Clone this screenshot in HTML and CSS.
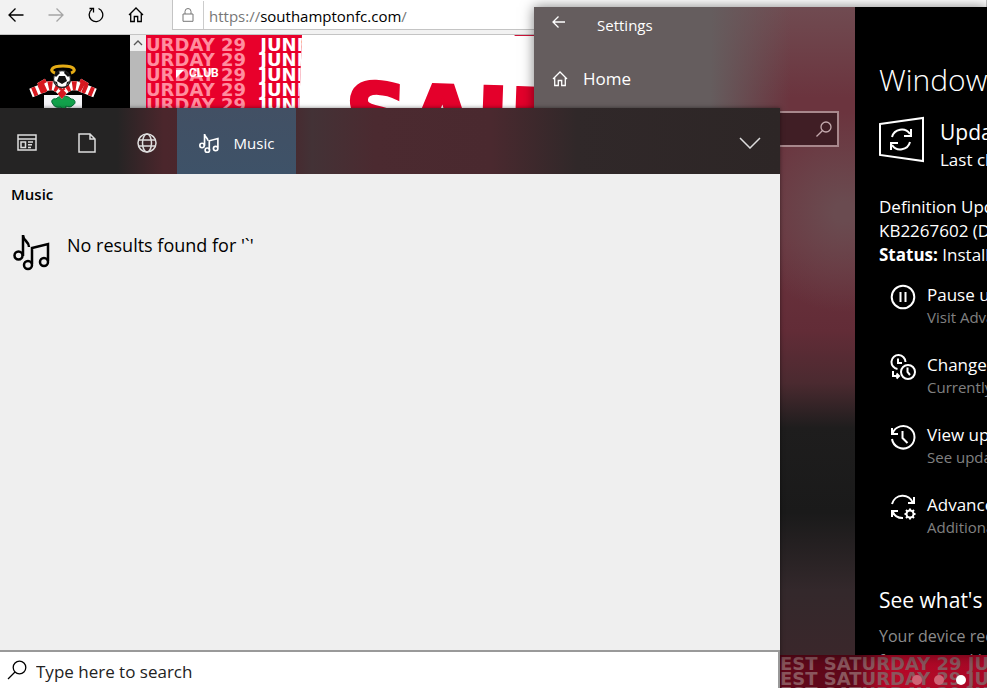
FILE: index.html
```html
<!DOCTYPE html>
<html lang="en">
<head>
    <meta charset="UTF-8">
    <meta name="viewport" content="width=device-width, initial-scale=1.0">
    <title>Desktop</title>
    <link rel="stylesheet" href="styles.css">
</head>
<body>
    <div class="desktop">
        <!-- Browser -->
        <div class="browser">
            <div class="toolbar">
                <div class="toolbar-buttons">
                    <button class="icon-button" aria-label="Back"><svg width="16" height="16" viewBox="0 0 16 16"><path d="M15.500 8H1M7.500 1.500L1 8l6.500 6.500"/></svg></button>
                    <button class="icon-button faded" aria-label="Forward"><svg width="16" height="16" viewBox="0 0 16 16"><path d="M.5 8H15M8.500 1.500L15 8l-6.500 6.500"/></svg></button>
                    <button class="icon-button" aria-label="Refresh"><svg width="16" height="16" viewBox="0 0 16 16"><path d="M10.500 1.500A6.800 6.800 0 1 1 4 2.300M1.500 1.500h4v4"/></svg></button>
                    <button class="icon-button" aria-label="Home"><svg width="16" height="16" viewBox="0 0 16 16"><path d="M1 8l7-7 7 7M2.700 6.500v8h3.600V9.500h3.400v5h3.600v-8"/></svg></button>
                </div>
                <div class="address-bar">
                    <svg class="lock" width="12" height="14" viewBox="0 0 12 14"><path d="M1 6h10v7.300H1zM3 6V3.500a3 3 0 0 1 6 0V6"/></svg>
                    <div class="address" role="textbox" aria-label="Address">https://<span>southamptonfc.com</span>/</div>
                </div>
            </div>
            <div class="page">
                <div class="club-sidebar">
                    <svg class="crest" width="70" height="60" viewBox="0 0 70 60">
                        <path d="M16 31h38v29H16z" fill="#f4f4f8"/>
                        <path d="M25 40c-3-3 0-6 3-5 3-4 12-4 15 0 5 0 5 5 2 6-2 3-6 2-7 1v8h-5v-7c-3 1-7 0-8-3z" fill="#12a14b" stroke="#063" stroke-width="1"/>
                        <!-- scarf: white band with red stripes -->
                        <g class="scarf">
                            <path d="M14 25Q25 17 34 28Q44 17 56 25"/>
                            <path d="M15 24L3 29M55 24l12 5M13 17l3 5M57 17l-3 5"/>
                        </g>
                        <g class="scarf stripes">
                            <path d="M14 25Q25 17 34 28Q44 17 56 25"/>
                            <path d="M15 24L3 29M55 24l12 5M13 17l3 5M57 17l-3 5"/>
                        </g>
                        <circle cx="34" cy="15" r="8.500" fill="#fff" stroke="#222"/>
                        <path d="M31 12h6l2 5-5 3-5-3zM26 11l4-4 2 2-4 4zM37 7l5 4-2 2-4-4zM26 17l3 1 1 4zM42 17l-3 1-1 4z" fill="#111"/>
                        <path class="halo" d="M27 9C21 7 23 2 35 2s14 5 8 7"/>
                    </svg>
                </div>
                <div class="scrollbar">
                    <button class="scroll-up" aria-label="Scroll up"><svg width="10" height="6" viewBox="0 0 10 6"><path d="M1 5l4-4 4 4"/></svg></button>
                </div>
                <div class="hero">
                    <div class="hero-top">
                        <div class="pattern">
                            <p>URDAY 29 <b>JUNE</b></p>
                            <p>URDAY 29 <b>JUNE</b></p>
                            <p>URDAY 29 <b>JUNE</b></p>
                            <p>URDAY 29 <b>JUNE</b></p>
                            <p>URDAY 29 <b>JUNE</b></p>
                            <a class="club-link" href="#"><svg width="8" height="8" viewBox="0 0 8 8"><path d="M0 0h8L0 8z"/></svg>CLUB</a>
                        </div>
                        <div class="hero-title">SAINTS</div>
                    </div>
                    <div class="hero-bottom">
                        <p>EST SATURDAY 29 JUNE</p>
                        <p>EST SATURDAY 29 JUNE</p>
                        <p>EST SATURDAY 29 JUNE</p>
                        <div class="dots">
                            <button aria-label="Slide 1"></button>
                            <button aria-label="Slide 2"></button>
                            <button class="current" aria-label="Slide 3"></button>
                        </div>
                    </div>
                </div>
            </div>
        </div>

        <!-- Settings -->
        <div class="settings">
            <div class="settings-nav">
                <div class="settings-title">
                    <button class="icon-button" aria-label="Back"><svg width="14" height="14" viewBox="0 0 14 14"><path d="M13 7H1M6.500 1.500L1 7l5.500 5.500"/></svg></button>
                    <span>Settings</span>
                </div>
                <a class="settings-home" href="#">
                    <svg width="16" height="16" viewBox="0 0 16 16"><path d="M1 8l7-7 7 7M2.700 6.500v8h3.600V9.500h3.400v5h3.600v-8"/></svg>
                    Home
                </a>
                <div class="find">
                    <input type="text" aria-label="Find a setting">
                    <svg width="16" height="16" viewBox="0 0 16 16"><circle cx="10" cy="6" r="5"/><path d="M6.300 9.700L.5 15.500"/></svg>
                </div>
            </div>
            <div class="settings-content">
                <h1>Windows Update</h1>
                <div class="update-status">
                    <svg width="48" height="48" viewBox="0 0 48 48">
                        <path d="M2 8l43-6v43L2 39z"/>
                        <path d="M14 21a10 10 0 0 1 18-3M33 13v7h-7M32 26a10 10 0 0 1-18 3M13 34v-7h7"/>
                    </svg>
                    <div>
                        <h2>Updates available</h2>
                        <p>Last checked: Today</p>
                    </div>
                </div>
                <div class="update-item">
                    <p>Definition Update for Windows</p>
                    <p>KB2267602 (Definition 1.295)</p>
                    <p><b>Status:</b> Installing</p>
                </div>
                <div class="options">
                    <a class="option" href="#">
                        <svg width="26" height="26" viewBox="0 0 26 26"><circle cx="13" cy="13" r="11.300"/><path d="M10.500 8v10M15.500 8v10"/></svg>
                        <span>Pause updates<small>Visit Advanced options</small></span>
                    </a>
                    <a class="option" href="#">
                        <svg width="26" height="26" viewBox="0 0 26 26"><path d="M7.500 15A7 7 0 1 1 15.500 8M8 4.500V9h4M3 17v5h6M6.500 19.500L9 22l-2.500 2.500"/><circle cx="18" cy="18" r="7"/><path d="M17.500 13.500V18l2.500 3"/></svg>
                        <span>Change active hours<small>Currently 8:00 AM</small></span>
                    </a>
                    <a class="option" href="#">
                        <svg width="26" height="26" viewBox="0 0 26 26"><path d="M2 4v6h6M2.500 9.500A11.300 11.300 0 1 1 2 15M12.500 7v7l5 5"/></svg>
                        <span>View update history<small>See updates installed</small></span>
                    </a>
                    <a class="option" href="#">
                        <svg width="26" height="26" viewBox="0 0 26 26"><path d="M2 10a11 11 0 0 1 21-1M24 3v6h-6M2 23v-6h6M2.500 17.500A11 11 0 0 0 13 24"/><circle cx="20" cy="20" r="3.500"/><path d="M20 14.500v2M20 23.500v2M14.500 20h2M23.500 20h2M16 16l1.500 1.500M22.500 22.500L24 24M24 16l-1.500 1.500M17.500 22.500L16 24"/></svg>
                        <span>Advanced options<small>Additional update controls</small></span>
                    </a>
                </div>
                <h3>See what's new</h3>
                <p class="note">Your device recently got<br>features and important</p>
            </div>
        </div>

        <!-- Search flyout -->
        <div class="search">
            <div class="tabs">
                <button class="tab" aria-label="All"><svg width="20" height="18" viewBox="0 0 20 18"><path d="M1 1h18v15H1zM1 5h18M4 8h4.500v5.500H4zM11 8h5M11 10.700h4M11 13.400h3"/></svg></button>
                <button class="tab" aria-label="Documents"><svg width="18" height="20" viewBox="0 0 18 20"><path d="M1 1h11l5 5v13H1zM12 1v5h5"/></svg></button>
                <button class="tab" aria-label="Web"><svg width="20" height="20" viewBox="0 0 20 20"><circle cx="10" cy="10" r="9"/><ellipse cx="10" cy="10" rx="4.500" ry="9"/><path d="M2 7h16M2 13h16"/></svg></button>
                <button class="tab active">
                    <svg width="20" height="20" viewBox="0 0 36 36"><path d="M10 23V2c0 6 6 6 6 12M18.500 30V14L34 10v16"/><circle cx="5.500" cy="22.500" r="4"/><circle cx="15" cy="31" r="4"/><circle cx="30" cy="28" r="4"/></svg>
                    Music
                </button>
                <button class="tab more" aria-label="More filters"><svg width="22" height="12" viewBox="0 0 22 12"><path d="M1 1l10 10L21 1"/></svg></button>
            </div>
            <div class="results">
                <h2>Music</h2>
                <div class="no-results">
                    <svg width="38" height="38" viewBox="0 0 38 38"><path d="M10 23V2c0 6 6 6 6 12M19 31V15L35 11v17"/><circle cx="5.500" cy="22.500" r="4"/><circle cx="15" cy="32" r="4"/><circle cx="31" cy="29" r="4"/></svg>
                    <span>No results found for '`'</span>
                </div>
            </div>
            <div class="search-box">
                <svg width="20" height="20" viewBox="0 0 20 20"><circle cx="12.500" cy="7.500" r="6.300"/><path d="M8 12L1 19"/></svg>
                <input type="text" placeholder="Type here to search" aria-label="Search">
            </div>
        </div>
    </div>
</body>
</html>
```

FILE: styles.css
```css
* {
    margin: 0;
    padding: 0;
    box-sizing: border-box;
}

body {
    font-family: "Open Sans", "Noto Sans", sans-serif;
    font-size: 16px;
    color: #000;
}

button {
    border: none;
    background: none;
    font: inherit;
    color: inherit;
}

a {
    color: inherit;
    text-decoration: none;
}

svg {
    fill: none;
    stroke: currentColor;
    stroke-width: 1.3;
    flex-shrink: 0;
}

input {
    font: inherit;
    border: none;
    outline: none;
    background: none;
    min-width: 0;
    flex: 1;
}

.desktop {
    position: relative;
    height: 100vh;
    overflow: hidden;
}

.icon-button {
    display: flex;
    align-items: center;
}

.icon-button.faded {
    color: #a5a5a5;
}

/* Browser */
.browser {
    height: 100%;
    display: flex;
    flex-direction: column;
    background-color: #f2f2f2;
}

.toolbar {
    height: 35px;
    display: flex;
    border-bottom: 1px solid #c4c4c4;
}

.toolbar-buttons {
    width: 172px;
    height: 29px;
    padding-left: 8px;
    display: flex;
    gap: 24px;
}

.address-bar {
    flex: 1;
    height: 30px;
    display: flex;
    align-items: center;
    background-color: #fff;
    border: 1px solid #c4c4c4;
    border-top: none;
}

.lock {
    width: 30px;
    color: #777;
    stroke-width: 1;
}

.address {
    padding: 2px 0 0 5px;
    border-left: 1px solid #ccc;
    color: #777;
    font-size: 15px;
    line-height: 26px;
}

.address span {
    color: #000;
}

.page {
    flex: 1;
    min-height: 0;
    display: flex;
}

.club-sidebar {
    width: 130px;
    padding: 29px 0 0 28px;
    background-color: #000;
}

.crest {
    stroke: none;
}

.scarf {
    stroke: #fff;
    stroke-width: 9;
}

.scarf.stripes {
    stroke: #d71920;
    stroke-dasharray: 4 3;
}

.halo {
    stroke: #e5ac15;
    stroke-width: 3;
}

.scrollbar {
    width: 16px;
    background-color: #b9b9b9;
}

.scroll-up {
    width: 16px;
    height: 16px;
    display: flex;
    align-items: center;
    justify-content: center;
    background-color: #eee;
    color: #555;
}

.hero {
    flex: 1;
    min-width: 0;
    display: flex;
    flex-direction: column;
    justify-content: space-between;
    background-color: #fff;
    font-family: "DejaVu Sans", sans-serif;
    font-weight: bold;
    overflow: hidden;
}

.hero-top {
    display: flex;
    height: 80px;
    background: linear-gradient(to top right, transparent 50%, #d0143a 51%) 358px 0 / 60px 3px no-repeat;
}

.pattern {
    position: relative;
    width: 156px;
    padding-top: 2px;
    overflow: hidden;
    background-color: #e8002b;
    clip-path: polygon(0 0, 100% 0, 98% 100%, 0 100%);
    color: #ff8d9f;
    font-size: 18px;
    line-height: 15px;
    white-space: nowrap;
}

.pattern b {
    margin-left: 8px;
    color: #fff;
}

.club-link {
    position: absolute;
    left: 30px;
    top: 31px;
    display: flex;
    align-items: center;
    gap: 5px;
    color: #fff;
    font-family: Roboto, sans-serif;
    font-size: 12px;
}

.club-link svg {
    fill: #fff;
    stroke: none;
}

.hero-title {
    padding: 40px 0 0 44px;
    color: #e4002b;
    font-size: 88px;
    line-height: 92px;
    transform: rotate(2deg);
    -webkit-text-stroke: 3px #e4002b;
}

.hero-bottom {
    position: relative;
    height: 33px;
    padding-top: 1px;
    padding-left: 634px;
    overflow: hidden;
    background: linear-gradient(100deg, #60081a 84%, #b70928 88%, #a80826);
    color: #8a565d;
    font-size: 18px;
    line-height: 15px;
    white-space: nowrap;
}

.dots {
    position: absolute;
    right: 21px;
    bottom: 3px;
    display: flex;
    gap: 12px;
}

.dots button {
    width: 10px;
    height: 10px;
    border-radius: 50%;
    background-color: #cf6375;
}

.dots .current {
    background-color: #fff;
}

/* Settings window */
.settings {
    position: absolute;
    left: 534px;
    right: 0;
    top: 7px;
    bottom: 33px;
    display: flex;
    overflow: hidden;
    color: #fff;
    background-color: #000;
    box-shadow: 0 0 12px rgba(0, 0, 0, 0.5);
}

.settings-nav {
    width: 321px;
    flex-shrink: 0;
    padding: 7px 16px;
    background: radial-gradient(circle at 310px 205px, #6a4b50 10px, transparent 100px), linear-gradient(to right, #655d5e 55%, transparent 80%) 0 0 / 100% 110px no-repeat, linear-gradient(#704b51, #6b343e 14%, #6b343e 36%, #622c37 50%, #4b2a30 58%, #1e1d1d 65%, #1a1a1a 78%, #33282b 90%, #3a272b);
}

.settings-title {
    display: flex;
    gap: 31px;
    padding-left: 2px;
    font-size: 15px;
    line-height: 22px;
}

.settings-title .icon-button {
    height: 16px;
}

.settings-home {
    display: flex;
    align-items: center;
    gap: 15px;
    margin-top: 30px;
    padding-left: 2px;
    font-size: 17px;
    line-height: 26px;
}

.find {
    display: flex;
    align-items: center;
    height: 36px;
    margin-top: 19px;
    padding-right: 5px;
    border: 2px solid #a8878c;
    background-color: #401e25;
    color: #c3a9ad;
}

.find input {
    color: #fff;
}

.settings-content {
    flex: 1;
    min-width: 0;
    padding: 53px 0 0 24px;
    overflow: hidden;
    white-space: nowrap;
}

.settings-content svg {
    stroke-width: 2;
}

.settings-content h1 {
    font-size: 30px;
    font-weight: 300;
    line-height: 40px;
}

.update-status {
    display: flex;
    align-items: flex-start;
    gap: 14px;
    margin-top: 16px;
}

.update-status svg {
    margin-left: -1px;
}

.update-status h2 {
    font-size: 21px;
    font-weight: normal;
    line-height: 32px;
}

.update-status p {
    font-size: 17px;
    line-height: 24px;
}

.update-item {
    margin-top: 23px;
    font-size: 17px;
    line-height: 24px;
}

.options {
    display: flex;
    flex-direction: column;
    gap: 24px;
    margin-top: 15px;
    padding-left: 11px;
}

.option {
    display: flex;
    align-items: center;
    gap: 11px;
    height: 46px;
    font-size: 17px;
    line-height: 25px;
}

.option svg {
    align-self: flex-start;
    margin-top: 2px;
}

.option small {
    display: block;
    color: #808080;
    font-size: 15px;
    line-height: 21px;
}

.settings-content h3 {
    margin-top: 46px;
    font-size: 21px;
    font-weight: normal;
    line-height: 32px;
}

.note {
    margin-top: 8px;
    color: #8c8c8c;
    font-size: 16px;
    line-height: 24px;
}

/* Search flyout */
.search {
    position: absolute;
    left: 0;
    top: 108px;
    bottom: 0;
    width: 780px;
    display: flex;
    flex-direction: column;
    background-color: #efefef;
    box-shadow: 0 0 4px rgba(0, 0, 0, 0.5);
}

.tabs {
    display: flex;
    height: 66px;
    background: linear-gradient(to right, #252424 15%, #4b262c 21%, #48282e 37%, #433236 40%, #4b2a30 48%, #4a292f 63%, #302829 74%, #2d2626);
    color: #ddd;
}

.tab {
    width: 60px;
    padding-top: 4px;
    display: flex;
    align-items: center;
    justify-content: center;
}

.tab:first-child {
    width: 57px;
    padding-right: 4px;
}

.tab svg {
    stroke-width: 1.500;
}

.tab.active {
    width: 119px;
    gap: 15px;
    background: linear-gradient(#425064, #3e5268);
    color: #fff;
    font-size: 15px;
}

.tab.active svg {
    stroke-width: 3;
}

.tab.more {
    margin-left: auto;
}

.results {
    flex: 1;
    padding: 8px 11px;
}

.results h2 {
    font-size: 15px;
    font-weight: 600;
    line-height: 24px;
}

.no-results {
    display: flex;
    gap: 16px;
    margin-top: 27px;
    padding-left: 2px;
    font-size: 18px;
    line-height: 24px;
}

.no-results svg {
    stroke-width: 2.500;
}

.search-box {
    display: flex;
    align-items: center;
    gap: 9px;
    height: 38px;
    padding-left: 7px;
    background-color: #fff;
    border-top: 2px solid #999;
    border-right: 2px solid #999;
}

.search-box input {
    padding-top: 2px;
    font-size: 17px;
}

.search-box input::placeholder {
    color: #222;
}
```
